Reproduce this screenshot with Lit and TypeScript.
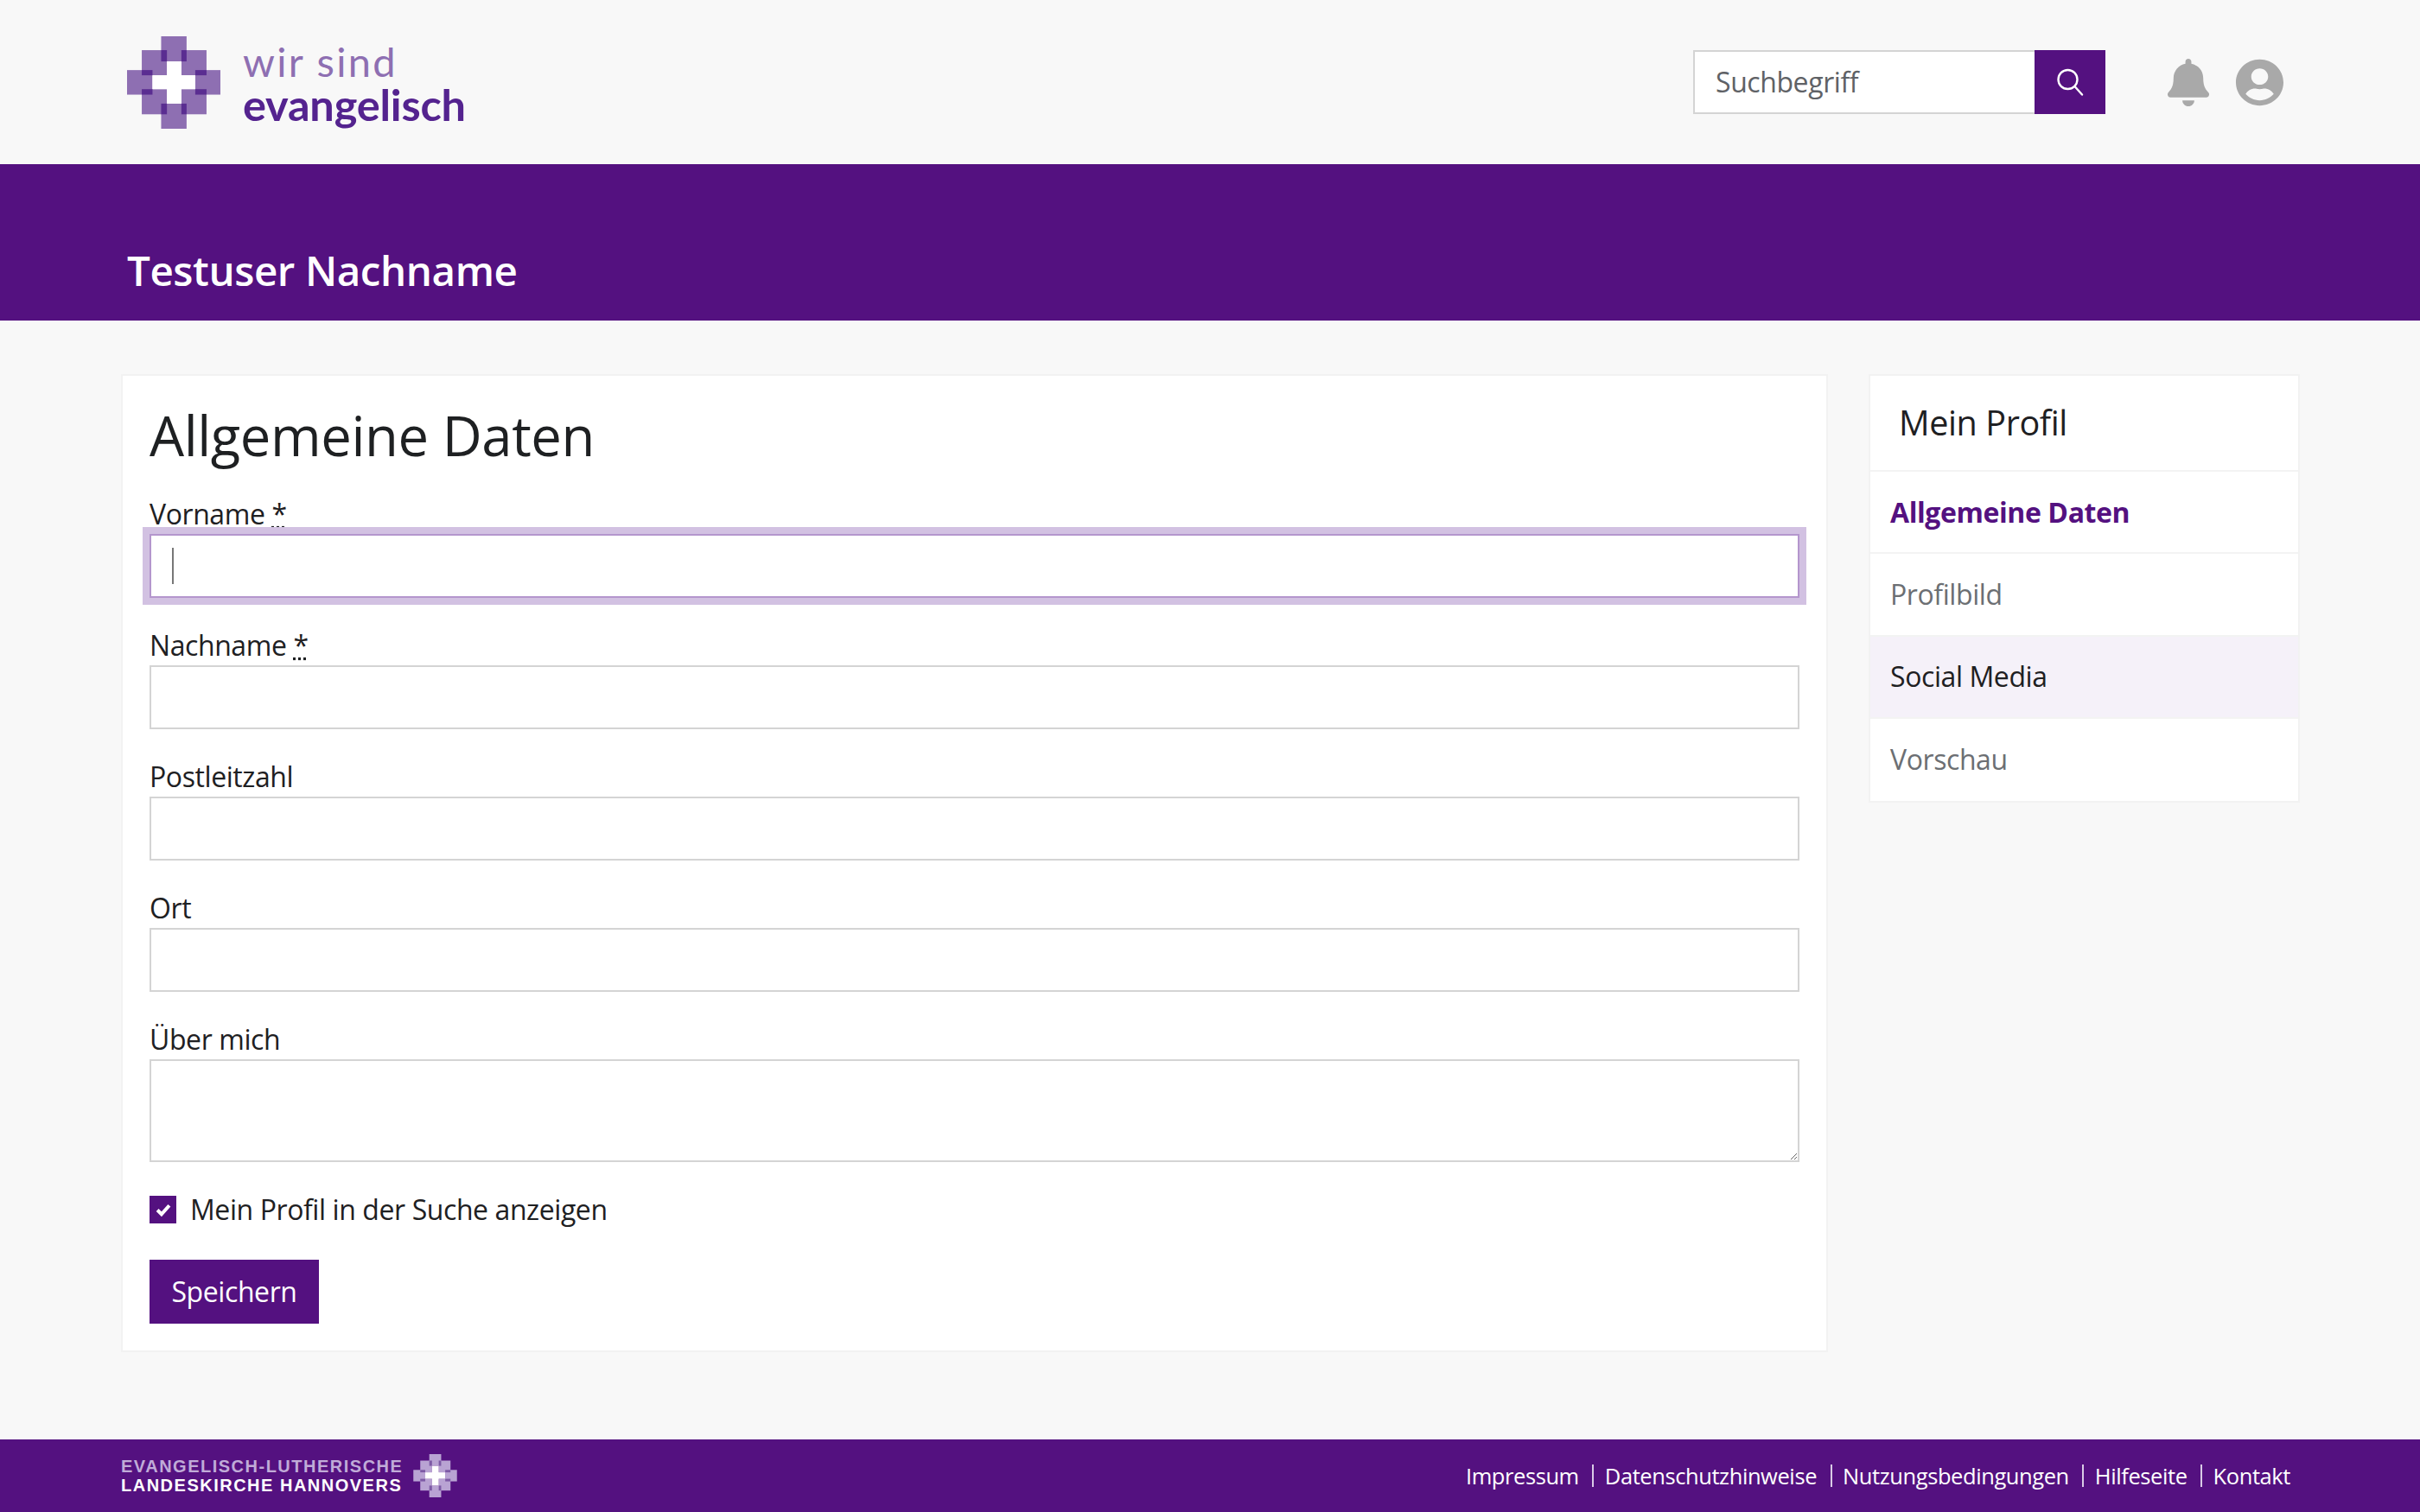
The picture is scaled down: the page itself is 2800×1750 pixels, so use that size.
import { LitElement, html, css, svg } from "lit";
import { customElement } from "lit/decorators.js";
import { classMap } from "lit/directives/class-map.js";

// cross made of overlapping squares, used in header and footer
const crossLogo = (light: string, dark: string, cls: string) => html`
  <svg class=${cls} viewBox="82 65 323 320" aria-hidden="true">
    <g fill=${light}>
      <rect x="200" y="65" width="88" height="87"></rect>
      <rect x="200" y="298" width="88" height="87"></rect>
      <rect x="82" y="182" width="88" height="85"></rect>
      <rect x="318" y="182" width="87" height="85"></rect>
      <rect x="133" y="113" width="87" height="87"></rect>
      <rect x="270" y="113" width="87" height="87"></rect>
      <rect x="133" y="248" width="87" height="87"></rect>
      <rect x="270" y="248" width="87" height="87"></rect>
    </g>
    <g fill=${dark}>
      ${[
        [200, 113, 20, 39], [270, 113, 18, 39],
        [133, 182, 37, 18], [318, 182, 39, 18],
        [133, 248, 37, 19], [318, 248, 39, 19],
        [200, 298, 20, 37], [270, 298, 18, 37],
      ].map(([x, y, w, h]) => svg`<rect x=${x} y=${y} width=${w} height=${h}></rect>`)}
    </g>
    <g fill="#fff">
      <rect x="220" y="152" width="50" height="146"></rect>
      <rect x="170" y="200" width="148" height="48"></rect>
    </g>
  </svg>
`;

const FIELDS = [
  { label: "Vorname", required: true, focused: true },
  { label: "Nachname", required: true },
  { label: "Postleitzahl" },
  { label: "Ort" },
];

const NAV = [
  { label: "Allgemeine Daten", state: "active" },
  { label: "Profilbild", state: "" },
  { label: "Social Media", state: "hover" },
  { label: "Vorschau", state: "" },
];

const FOOTER_LINKS = ["Impressum", "Datenschutzhinweise", "Nutzungsbedingungen", "Hilfeseite", "Kontakt"];

@customElement("app-root")
export class AppRoot extends LitElement {
  static styles = css`
    :host {
      display: flex;
      flex-direction: column;
      min-height: 1750px;
      background: #f8f8f8;
      color: #1e2022;
      font-family: "Open Sans", "Noto Sans", sans-serif;
      font-size: 32px;
      line-height: 1.5;
      letter-spacing: -0.013em;
    }
    * { box-sizing: border-box; }

    /* header */
    .header {
      height: 190px;
      display: flex;
      align-items: center;
      padding: 0 158px 0 147px;
    }
    .logo { display: flex; align-items: center; gap: 26px; }
    .logo-cross { width: 108px; height: 107px; display: block; }
    .logo-text { display: flex; flex-direction: column; margin-top: 1px; }
    .logo-top {
      font-family: "Lato", sans-serif;
      font-size: 47px;
      line-height: 50px;
      letter-spacing: 2.3px;
      color: #8e6fb2;
    }
    .logo-bottom {
      font-family: "Lato", sans-serif;
      font-weight: 700;
      font-size: 50.5px;
      line-height: 50px;
      letter-spacing: -0.2px;
      color: #54238f;
    }
    .tools { margin-left: auto; display: flex; align-items: center; }
    .search { display: flex; width: 477px; height: 74px; }
    .search input {
      flex: 1;
      min-width: 0;
      border: 2px solid #d4d4d4;
      border-right: 0;
      border-radius: 0;
      background: #fff;
      padding: 0 24px;
      font: inherit;
      letter-spacing: inherit;
      color: #212529;
      outline: none;
    }
    .search input::placeholder { color: #5f6266; opacity: 1; }
    .search button {
      width: 82px;
      border: 0;
      padding: 0;
      background: #541180;
      display: flex;
      align-items: center;
      justify-content: center;
    }
    .search svg { width: 32px; height: 32px; display: block; }
    .bell { width: 50px; height: 55px; margin-left: 71px; display: block; }
    .user { width: 55px; height: 55px; margin-left: 30px; display: block; }

    /* banner */
    .banner {
      height: 181px;
      background: #541180;
      color: #fff;
      padding: 0 147px 22px;
      display: flex;
      align-items: flex-end;
    }
    .banner h2 { margin: 0; font-size: 47.5px; line-height: 72px; font-weight: 600; }

    /* content */
    .main {
      flex: 1;
      display: grid;
      grid-template-columns: 1975px 499px;
      gap: 47px;
      align-items: start;
      padding: 62px 0 0 140px;
    }
    .card { background: #fff; border: 2px solid #f2f2f2; }
    .form { padding: 31px; }
    .form h1 { margin: 0 0 29px; font-size: 63.4px; line-height: 76px; font-weight: 400; }
    .field { margin-bottom: 31px; }
    .field label { display: block; height: 47px; }
    abbr { text-decoration: underline dotted; }
    .control { position: relative; }
    input.text, textarea {
      display: block;
      width: 100%;
      height: 74px;
      border: 2px solid #d4d4d4;
      border-radius: 0;
      background: #fff;
      padding: 0 24px;
      font: inherit;
      outline: none;
    }
    textarea { height: 119px; resize: vertical; padding: 10px 24px; }
    input.text.focused { border-color: #b496cd; box-shadow: 0 0 0 8px #d2c1e2; }
    .caret {
      position: absolute;
      left: 26px;
      top: 16px;
      width: 2px;
      height: 42px;
      background: #777;
    }
    .check { display: flex; align-items: center; gap: 16px; margin: 39px 0 42px; height: 32px; }
    .box {
      width: 31px;
      height: 32px;
      background: #541180;
      display: flex;
      align-items: center;
      justify-content: center;
    }
    .box svg { width: 18px; height: 18px; display: block; }
    .save {
      display: block;
      height: 74px;
      width: 196px;
      border: 0;
      background: #541180;
      color: #fff;
      font: inherit;
      letter-spacing: inherit;
      padding: 0;
    }

    /* sidebar */
    .side-head {
      height: 111px;
      padding: 0 33px;
      display: flex;
      align-items: center;
      font-size: 39.6px;
      border-bottom: 2px solid #f3f3f3;
    }
    .side-item {
      height: 95.25px;
      padding: 0 23px;
      display: flex;
      align-items: center;
      color: #6c6f73;
      border-bottom: 2px solid #f3f3f3;
    }
    .side-item:last-child { border-bottom: 0; }
    .side-item.active { color: #541180; font-weight: 700; }
    .side-item.hover { color: #1e2022; background: #f5f1f9; }

    /* footer */
    .footer {
      height: 84px;
      background: #541180;
      color: #fff;
      display: flex;
      align-items: center;
      justify-content: space-between;
      padding: 0 134px 0 140px;
    }
    .brand { display: flex; align-items: center; gap: 12px; }
    .brand-text {
      font-family: "Liberation Sans", sans-serif;
      font-weight: 700;
      font-size: 20px;
      line-height: 22px;
      letter-spacing: 1.5px;
      white-space: nowrap;
    }
    .brand-text .dim { display: block; color: #c0abd8; }
    .brand-text .full { display: block; color: #fff; }
    .brand-cross { width: 51px; height: 50px; display: block; }
    .links { display: flex; align-items: center; font-size: 25.5px; }
    .links a { color: #fff; padding: 0 15.5px 0 12.5px; border-left: 2px solid #d9cbe6; line-height: 26px; }
    .links a:first-child { border-left: 0; }
    .links a:last-child { padding-right: 16px; }
  `;

  render() {
    return html`
      <header class="header">
        <div class="logo">
          ${crossLogo("#8e6fb2", "#5a2d91", "logo-cross")}
          <div class="logo-text">
            <span class="logo-top">wir sind</span>
            <span class="logo-bottom">evangelisch</span>
          </div>
        </div>
        <div class="tools">
          <div class="search">
            <input type="text" placeholder="Suchbegriff" />
            <button aria-label="Suchen">
              <svg viewBox="0 0 32 32" fill="none" stroke="#fff" stroke-width="2.4" stroke-linecap="round">
                <circle cx="13.5" cy="13" r="11"></circle>
                <path d="M21.5 21 30 30.5"></path>
              </svg>
            </button>
          </div>
          <svg class="bell" viewBox="0 0 448 512" fill="#a9a9a9">
            <path d="M224 512c35.32 0 63.97-28.65 63.97-64H160.03c0 35.35 28.65 64 63.97 64zm215.39-149.71c-19.32-20.76-55.47-51.99-55.47-154.29 0-77.7-54.48-139.9-127.94-155.16V32c0-17.67-14.32-32-31.98-32s-31.98 14.33-31.98 32v20.84C118.56 68.1 64.08 130.3 64.08 208c0 102.3-36.15 133.53-55.47 154.29-6 6.45-8.66 14.16-8.61 21.71.11 16.4 12.98 32 32.1 32h383.8c19.12 0 32-15.6 32.1-32 .05-7.55-2.61-15.27-8.61-21.71z"></path>
          </svg>
          <svg class="user" viewBox="0 0 496 512" preserveAspectRatio="none" fill="#a9a9a9">
            <path d="M248 8C111 8 0 119 0 256s111 248 248 248 248-111 248-248S385 8 248 8zm0 96c48.6 0 88 39.4 88 88s-39.4 88-88 88-88-39.4-88-88 39.4-88 88-88zm0 344c-58.7 0-111.3-26.6-146.5-68.2 18.8-35.4 55.6-59.8 98.5-59.8 2.4 0 4.8.4 7.1 1.1 13 4.2 26.6 6.9 40.9 6.9 14.3 0 28-2.7 40.9-6.9 2.3-.7 4.7-1.1 7.1-1.1 42.9 0 79.7 24.4 98.5 59.8C359.3 421.4 306.7 448 248 448z"></path>
          </svg>
        </div>
      </header>

      <div class="banner"><h2>Testuser Nachname</h2></div>

      <main class="main">
        <section class="card form">
          <h1>Allgemeine Daten</h1>
          ${FIELDS.map(
            (f) => html`
              <div class="field">
                <label>${f.label}${f.required ? html` <abbr title="Pflichtfeld">*</abbr>` : ""}</label>
                <div class="control">
                  <input type="text" class=${classMap({ text: true, focused: !!f.focused })} />
                  ${f.focused ? html`<span class="caret"></span>` : ""}
                </div>
              </div>
            `
          )}
          <div class="field">
            <label>Über mich</label>
            <textarea></textarea>
          </div>
          <div class="check">
            <span class="box">
              <svg viewBox="0 0 17 17" fill="none" stroke="#fff" stroke-width="3.8">
                <path d="M2 9l4.5 4.5L15 4"></path>
              </svg>
            </span>
            <span>Mein Profil in der Suche anzeigen</span>
          </div>
          <button class="save">Speichern</button>
        </section>

        <aside class="card">
          <div class="side-head">Mein Profil</div>
          ${NAV.map(
            (item) => html`
              <div class=${classMap({ "side-item": true, active: item.state === "active", hover: item.state === "hover" })}>
                ${item.label}
              </div>
            `
          )}
        </aside>
      </main>

      <footer class="footer">
        <div class="brand">
          <div class="brand-text">
            <span class="dim">EVANGELISCH-LUTHERISCHE</span>
            <span class="full">LANDESKIRCHE HANNOVERS</span>
          </div>
          ${crossLogo("#b9a3d3", "#7d5aa5", "brand-cross")}
        </div>
        <nav class="links">
          ${FOOTER_LINKS.map((l) => html`<a>${l}</a>`)}
        </nav>
      </footer>
    `;
  }
}
